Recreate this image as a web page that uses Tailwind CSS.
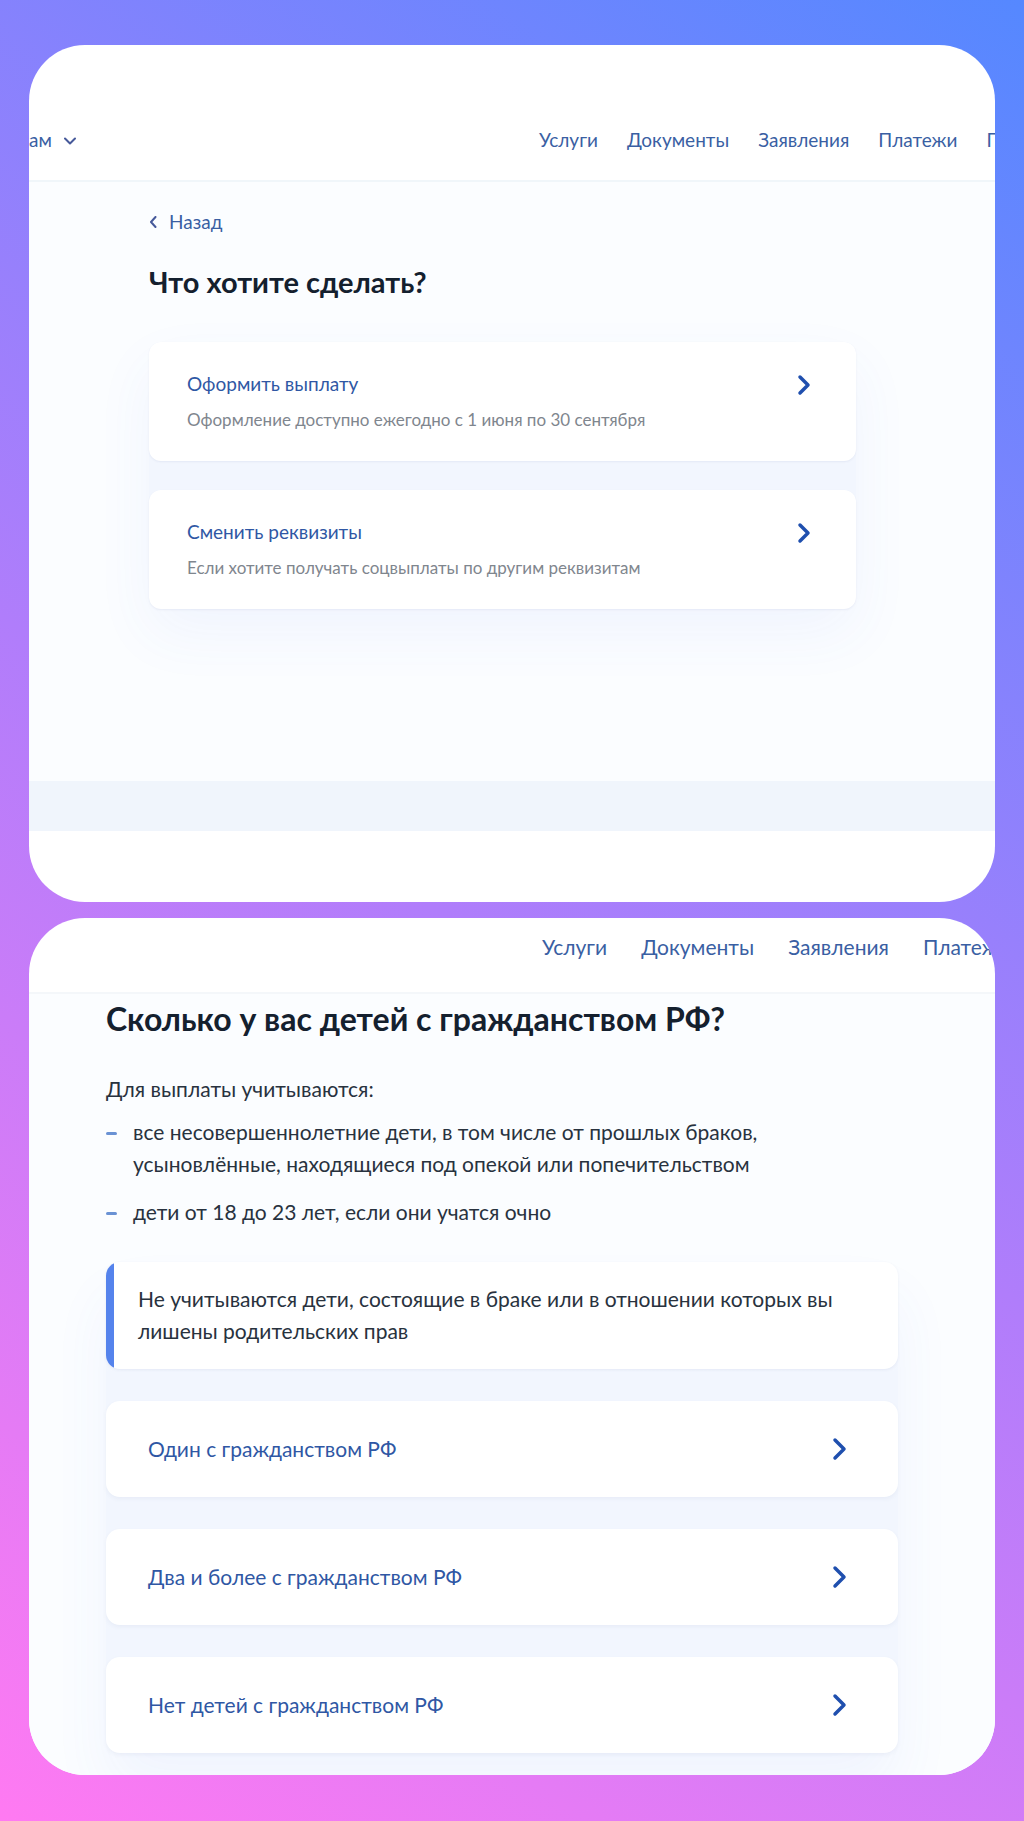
<!DOCTYPE html>
<html lang="ru">
<head>
  <meta charset="UTF-8">
  <meta name="viewport" content="width=device-width, initial-scale=1.0">
  <title>Госуслуги</title>
  <script src="https://cdn.jsdelivr.net/npm/@tailwindcss/browser@4"></script>
</head>
<body class="min-h-screen bg-[linear-gradient(214deg,#5588ff_0%,#b07dfb_52%,#ff7af2_100%)] font-['Lato','Open_Sans',sans-serif] px-[29px] pt-[45px] pb-[45px] flex flex-col gap-4">

  <!-- Screen 1: choose an action -->
  <section class="rounded-[56px] bg-white overflow-hidden pb-[71px]">
    <header class="h-[137px] pt-[60px] pb-1 flex items-center border-b-2 border-[#f0f6fa] text-[19px] text-[#3a5fa3] whitespace-nowrap">
      <button type="button" class="flex items-center gap-3">
        ам
        <svg class="w-3 h-2" viewBox="0 0 12 8" fill="none" stroke="#46599a" stroke-width="2" stroke-linecap="round" stroke-linejoin="round"><path d="M1 1.5l5 5 5-5"/></svg>
      </button>
      <nav class="ml-auto w-[456px] flex shrink-0 gap-[29px]">
        <a href="#">Услуги</a>
        <a href="#">Документы</a>
        <a href="#">Заявления</a>
        <a href="#">Платежи</a>
        <a href="#">Помощь</a>
      </nav>
    </header>

    <main class="bg-[#fbfdff] pt-6 pb-[172px] pl-[120px] pr-[139px]">
      <a href="#" class="inline-flex items-center gap-3 text-[19px] leading-8 text-[#3a5fa3]">
        <svg class="w-2 h-3" viewBox="0 0 8 12" fill="none" stroke="#46599a" stroke-width="2" stroke-linecap="round" stroke-linejoin="round"><path d="M6.500 1L2 6l4.500 5"/></svg>
        Назад
      </a>
      <h1 class="mt-6 text-[29px] leading-10 font-bold text-[#14202e]">Что хотите сделать?</h1>

      <div class="mt-10 flex flex-col gap-[29px] rounded-xl bg-[#f2f6fe] shadow-[0_24px_60px_rgba(60,100,230,0.06)]">
        <a href="#" class="flex justify-between rounded-xl bg-white pl-[38px] pr-[45px] pt-[28px] pb-[29px] shadow-[0_1px_2px_rgba(60,80,140,0.08)]">
          <span>
            <span class="block text-[19px] leading-7 text-[#2f57a4]">Оформить выплату</span>
            <span class="block mt-[10px] text-[17px] leading-6 text-[#7f868e]">Оформление доступно ежегодно с 1 июня по 30 сентября</span>
          </span>
          <svg class="mt-1 w-[14px] h-[22px]" viewBox="0 0 14 22" fill="none" stroke="#1f4fae" stroke-width="3.500" stroke-linecap="round" stroke-linejoin="round"><path d="M3 3l8 8-8 8"/></svg>
        </a>
        <a href="#" class="flex justify-between rounded-xl bg-white pl-[38px] pr-[45px] pt-[28px] pb-[29px] shadow-[0_1px_2px_rgba(60,80,140,0.08)]">
          <span>
            <span class="block text-[19px] leading-7 text-[#2f57a4]">Сменить реквизиты</span>
            <span class="block mt-[10px] text-[17px] leading-6 text-[#7f868e]">Если хотите получать соцвыплаты по другим реквизитам</span>
          </span>
          <svg class="mt-1 w-[14px] h-[22px]" viewBox="0 0 14 22" fill="none" stroke="#1f4fae" stroke-width="3.500" stroke-linecap="round" stroke-linejoin="round"><path d="M3 3l8 8-8 8"/></svg>
        </a>
      </div>
    </main>

    <div class="h-[50px] bg-[#f0f5fc]"></div>
  </section>

  <!-- Screen 2: number of children -->
  <section class="rounded-[56px] bg-white overflow-hidden">
    <header class="h-[76px] pt-[13px] flex items-start border-b-2 border-[#f4f7fa] text-[21px] leading-8 text-[#3a5fa3] whitespace-nowrap">
      <nav class="ml-auto w-[453px] flex shrink-0 gap-[34px]">
        <a href="#">Услуги</a>
        <a href="#">Документы</a>
        <a href="#">Заявления</a>
        <a href="#">Платежи</a>
      </nav>
    </header>

    <main class="bg-[#fbfdff] pt-[5px] pb-[22px] pl-[77px] pr-[97px] text-[21px] leading-8 text-[#28323e]">
      <h2 class="text-[32px] leading-10 font-bold text-[#14202e]">Сколько у вас детей с гражданством РФ?</h2>
      <p class="mt-[34px]">Для выплаты учитываются:</p>
      <ul class="mt-[11px] flex flex-col gap-4">
        <li class="flex gap-4">
          <span class="mt-4 w-[11px] h-[3px] shrink-0 rounded-sm bg-[#6a92d4]"></span>
          <span>все несовершеннолетние дети, в том числе от прошлых браков,<br>усыновлённые, находящиеся под опекой или попечительством</span>
        </li>
        <li class="flex gap-4">
          <span class="mt-4 w-[11px] h-[3px] shrink-0 rounded-sm bg-[#6a92d4]"></span>
          <span>дети от 18 до 23 лет, если они учатся очно</span>
        </li>
      </ul>

      <div class="mt-[34px] flex flex-col gap-8 rounded-[14px] bg-[linear-gradient(#fbfdff,#f2f6fe_110px)] shadow-[0_36px_60px_rgba(60,100,230,0.06)]">
        <div class="rounded-[14px] overflow-hidden bg-white shadow-[0_1px_3px_rgba(60,80,140,0.08)]">
          <p class="border-l-8 border-[#5583ec] pl-6 pr-8 pt-[21px] pb-[22px]">Не учитываются дети, состоящие в браке или в отношении которых вы лишены родительских прав</p>
        </div>
        <a href="#" class="flex items-center justify-between rounded-[14px] bg-white h-24 pl-[42px] pr-[50px] text-[#2f57a4] shadow-[0_2px_4px_rgba(60,80,140,0.06)]">
          Один с гражданством РФ
          <svg class="w-4 h-6" viewBox="0 0 16 24" fill="none" stroke="#1f4fae" stroke-width="3.500" stroke-linecap="round" stroke-linejoin="round"><path d="M3 3l9 9-9 9"/></svg>
        </a>
        <a href="#" class="flex items-center justify-between rounded-[14px] bg-white h-24 pl-[42px] pr-[50px] text-[#2f57a4] shadow-[0_2px_4px_rgba(60,80,140,0.06)]">
          Два и более с гражданством РФ
          <svg class="w-4 h-6" viewBox="0 0 16 24" fill="none" stroke="#1f4fae" stroke-width="3.500" stroke-linecap="round" stroke-linejoin="round"><path d="M3 3l9 9-9 9"/></svg>
        </a>
        <a href="#" class="flex items-center justify-between rounded-[14px] bg-white h-24 pl-[42px] pr-[50px] text-[#2f57a4] shadow-[0_2px_4px_rgba(60,80,140,0.06)]">
          Нет детей с гражданством РФ
          <svg class="w-4 h-6" viewBox="0 0 16 24" fill="none" stroke="#1f4fae" stroke-width="3.500" stroke-linecap="round" stroke-linejoin="round"><path d="M3 3l9 9-9 9"/></svg>
        </a>
      </div>
    </main>
  </section>

</body>
</html>
